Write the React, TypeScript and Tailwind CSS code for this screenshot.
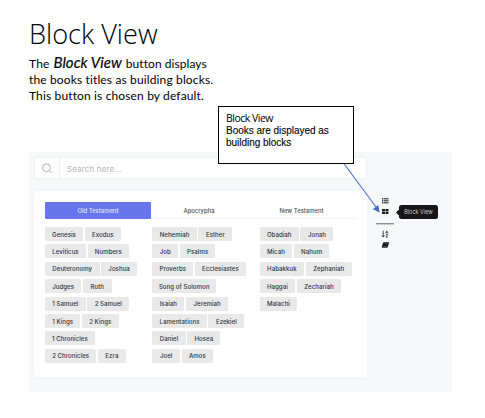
import React from 'react';

type Book = [name: string, width: number];

const columns: Book[][][] = [
  [
    [['Genesis', 38], ['Exodus', 36.5]],
    [['Leviticus', 41], ['Numbers', 41.5]],
    [['Deuteronomy', 54.5], ['Joshua', 36]],
    [['Judges', 36.2], ['Ruth', 29]],
    [['1 Samuel', 40.7], ['2 Samuel', 42]],
    [['1 Kings', 35.3], ['2 Kings', 36.7]],
    [['1 Chronicles', 49.7]],
    [['2 Chronicles', 51.3], ['Ezra', 28]],
  ],
  [
    [['Nehemiah', 44.5], ['Esther', 34]],
    [['Job', 26], ['Psalms', 35.5]],
    [['Proverbs', 41], ['Ecclesiastes', 51]],
    [['Song of Solomon', 63.7]],
    [['Isaiah', 32], ['Jeremiah', 42.5]],
    [['Lamentations', 54.5], ['Ezekiel', 36]],
    [['Daniel', 33.5], ['Hosea', 33]],
    [['Joel', 27.7], ['Amos', 31.5]],
  ],
  [
    [['Obadiah', 39.3], ['Jonah', 33]],
    [['Micah', 32.7], ['Nahum', 35.5]],
    [['Habakkuk', 44.5], ['Zephaniah', 46]],
    [['Haggai', 35.5], ['Zechariah', 44.5]],
    [['Malachi', 37.7]],
  ],
];

function Chip({ name, width }: { name: string; width: number }) {
  return (
    <span
      className="flex h-[14px] shrink-0 items-center justify-center rounded-[1.5px] bg-[#e9e9e9] pt-[0.4px] whitespace-nowrap text-[6.1px] font-medium tracking-[0.04px] text-[#30363e]"
      style={{ width }}
    >
      {name}
    </span>
  );
}

function Toolbar() {
  return (
    <svg className="block h-[60px] w-[20px]" viewBox="0 0 20 60" fill="#171717">
      {[3.2, 5.2, 7.2].map((y) => (
        <g key={y}>
          <rect x="6" y={y} width="1.3" height="1.2" />
          <rect x="7.8" y={y + 0.1} width="4.8" height="1" />
        </g>
      ))}
      <rect x="6" y="14" width="3" height="2.2" rx="0.3" />
      <rect x="9.5" y="14" width="3" height="2.2" rx="0.3" />
      <rect x="6" y="16.7" width="3" height="2.2" rx="0.3" />
      <rect x="9.5" y="16.7" width="3" height="2.2" rx="0.3" />
      <rect x="0" y="28.3" width="18" height="1" fill="#666" />
      <path d="M7.2 35.6v6M5.9 40.4l1.3 1.6 1.3-1.6" fill="none" stroke="#171717" strokeWidth="0.8" />
      <path d="M9.6 38.3l1.2-2.4 1.2 2.4M9.9 37.7h1.8M9.8 39.6h2l-2 2.5h2.2" fill="none" stroke="#171717" strokeWidth="0.65" />
      <path d="M8 47.3h4.4q.8 0 .6.8l-1.3 4q-.2.7-.9.7H7q-1.4 0-1.2-1.3l1.2-3.4q.2-.8 1-.8z" />
      <path d="M8.8 48.7h2.6M6.9 51.6h3.7" stroke="#b7b7b7" strokeWidth="0.4" />
    </svg>
  );
}

export default function App() {
  return (
    <main className="relative h-[418px] w-[485px] overflow-hidden bg-white font-['Inter',sans-serif]">
      <header className="h-[152px] pt-[14px] pl-[29px] font-['Open_Sans',sans-serif] text-black">
        <h1 className="h-[39px] origin-left scale-x-[0.97] whitespace-nowrap text-[28px] leading-[39px] font-light">Block View</h1>
        <div className="whitespace-nowrap text-[12px] leading-[17px] font-['Lato',sans-serif]">
          <p className="flex h-[18px] items-baseline gap-[4px] tracking-[0.15px]">
            <span>The</span>
            <em className="text-[15px] leading-[18px] font-normal tracking-[0.05px] [-webkit-text-stroke:0.15px_black]">Block View</em>
            <span className="tracking-[0.06px]">button displays</span>
          </p>
          <p className="tracking-[0.14px]">the books titles as building blocks.</p>
          <p className="leading-[16px] tracking-[0.14px]">This button is chosen by default.</p>
        </div>
      </header>

      <section className="ml-[29px] flex h-[240px] w-[423px] bg-[#f7f8fa] pt-[5px] pl-[5px]">
        <div className="w-[333px] shrink-0">
          <div className="flex h-[22px] rounded-[2px] border border-[#f0f1f3] bg-white">
            <div className="flex w-[25px] items-center justify-center border-r border-[#eeeff1]">
              <svg className="h-[11px] w-[11px]" viewBox="0 0 11 11" fill="none" stroke="#a5a5a5" strokeWidth="0.9">
                <circle cx="4.5" cy="4.8" r="3.9" />
                <path d="M7.5 7.8l2.2 2.2" />
              </svg>
            </div>
            <span className="pl-[7px] text-[8px] leading-[22px] tracking-[0.14px] text-[#b5b5b5]">Search here...</span>
          </div>

          <div className="mt-[12px] h-[186px] rounded-[2px] bg-white pt-[11px] pl-[11px] shadow-[0_0_4px_rgba(0,0,0,0.035)]">
            <div className="flex h-[17px] w-[311px] items-start border-b border-[#f3f3f3] text-[5.9px] font-medium text-[#4b4f55]">
              <div className="flex h-[17px] w-[106px] shrink-0 items-center justify-center rounded-[1px] bg-[#6776ec] pt-[1px] text-[#e3e6ff]">Old Testament</div>
              <div className="flex h-[17px] w-[96px] shrink-0 items-center justify-center pt-[1px]">Apocrypha</div>
              <div className="flex h-[17px] w-[109px] shrink-0 items-center justify-center pt-[1px]">New Testament</div>
            </div>
            <div className="flex pt-[8px]">
              {columns.map((rows, index) => (
                <div key={index} className="flex w-[107.3px] shrink-0 flex-col gap-[3.4px]">
                  {rows.map((row) => (
                    <div key={row[0][0]} className="flex gap-[1.6px]">
                      {row.map(([name, width]) => <Chip key={name} name={name} width={width} />)}
                    </div>
                  ))}
                </div>
              ))}
            </div>
          </div>
        </div>
        <aside className="flex pt-[38px] pl-[9px]">
          <Toolbar />
          <div className="relative mt-[10px] ml-[3px] flex h-[14px] w-[39px] items-center justify-center rounded-[2.5px] bg-[#171719] text-[5.5px] whitespace-nowrap text-[#c5c5c5]">
            <i className="absolute top-[4.5px] -left-[2px] h-[5px] w-[5px] rotate-45 bg-[#171719]" />
            <span className="relative">Block View</span>
          </div>
        </aside>
      </section>

      <svg className="pointer-events-none absolute top-0 left-0 h-[418px] w-[485px]" viewBox="0 0 485 418">
        <path d="M343.5 163L376 207" stroke="#4472c4" strokeWidth="1.1" />
        <path d="M379.7 212.5l-6.8-3.3 5.3-4.1z" fill="#3e6ac1" />
      </svg>
      <div className="absolute top-[106px] left-[218px] h-[58px] w-[136px] border border-black bg-white pt-[5px] pl-[7px] font-['Liberation_Sans',sans-serif] text-[10px] leading-[12px] text-black">
        <p className="font-['Open_Sans',sans-serif] text-[10.5px] leading-[13px] tracking-[-0.5px]">Block View</p>
        <p className="tracking-[-0.03px] [-webkit-text-stroke:0.1px_black]">Books are displayed as<br />building blocks</p>
      </div>
    </main>
  );
}
